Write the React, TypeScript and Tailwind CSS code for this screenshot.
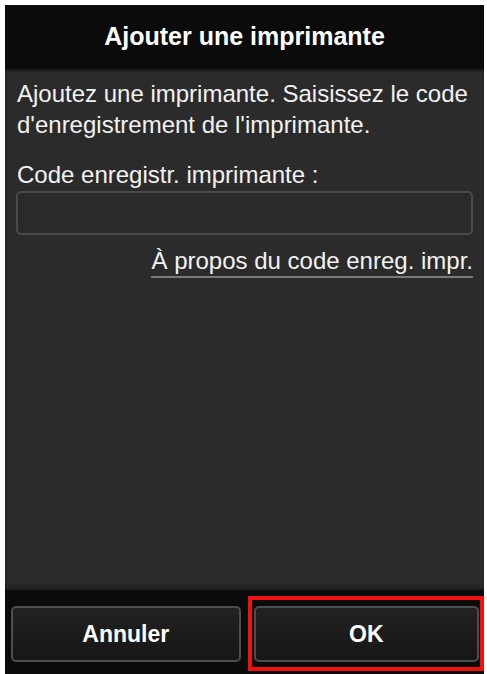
export default function App() {
  return (
    <div className="h-[674px] w-full bg-white pl-[5px] pr-[3px] pt-[5px] font-['Liberation_Sans',Arial,sans-serif]">
      <div className="flex h-full flex-col">
        <header className="flex h-[64px] shrink-0 items-center justify-center bg-[#0b0b0b]">
          <h1 className="text-[25px] font-bold text-white">Ajouter une imprimante</h1>
        </header>

        <main className="flex flex-1 flex-col bg-[#2b2b2b] px-[11px] pt-[9px] shadow-[inset_0_2px_2px_rgba(0,0,0,0.4),inset_0_-6px_5px_-3px_rgba(0,0,0,0.35)]">
          <p className="pl-px text-[24px] leading-[31px] text-[#f2f2f2]">
            Ajoutez une imprimante. Saisissez le code d'enregistrement de l'imprimante.
          </p>
          <label className="mt-[19px] pl-px text-[24px] leading-[31px] text-[#f2f2f2]">
            Code enregistr. imprimante :
          </label>
          <input
            type="text"
            className="mt-px h-[44px] w-full rounded-[5px] border-2 border-[#4a4a4a] bg-[#2a2a2a] px-3 text-[22px] text-white outline-none"
          />
          <div className="mt-[11px] flex justify-end">
            <a className="inline-block border-b-2 border-[#7a7a7a] text-[24px] leading-[30px] text-[#f2f2f2]">
              À propos du code enreg. impr.
            </a>
          </div>
        </main>

        <footer className="flex h-[84px] shrink-0 gap-[13px] bg-[#0b0b0b] pl-[6px] pr-[5px] pt-[16px] pb-[12px]">
          <button className="flex-1 rounded-[5px] border-2 border-[#4e4e4e] bg-gradient-to-b from-[#222] to-[#161616] text-[23px] font-bold text-white">
            Annuler
          </button>
          <div className="relative flex-1">
            <button className="h-full w-full rounded-[5px] border-2 border-[#4e4e4e] bg-gradient-to-b from-[#222] to-[#161616] text-[23px] font-bold text-white">
              OK
            </button>
            {/* annotation frame */}
            <div className="pointer-events-none absolute -bottom-[9px] -left-[6px] -right-[5px] -top-[10px] border-4 border-[#f01212]" />
          </div>
        </footer>
      </div>
    </div>
  );
}
